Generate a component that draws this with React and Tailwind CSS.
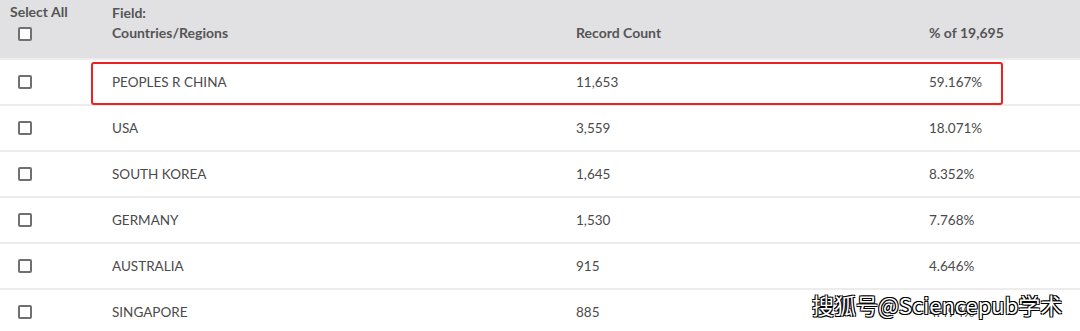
import React from 'react';

const rows = [
  { name: 'PEOPLES R CHINA', count: '11,653', pct: '59.167%' },
  { name: 'USA', count: '3,559', pct: '18.071%' },
  { name: 'SOUTH KOREA', count: '1,645', pct: '8.352%' },
  { name: 'GERMANY', count: '1,530', pct: '7.768%' },
  { name: 'AUSTRALIA', count: '915', pct: '4.646%' },
  { name: 'SINGAPORE', count: '885', pct: '4.494%' },
];

function Checkbox() {
  return <span className="block w-[14px] h-[14px] border-2 border-[#707070] rounded-[2px] bg-white" />;
}

export default function App() {
  return (
    <div className="relative w-[1080px] h-[331px] overflow-hidden bg-white font-['Lato',sans-serif] text-[14px]">
      {/* Header */}
      <div className="grid grid-cols-[112px_464px_353px_1fr] h-[60px] bg-[#e1e1e4] border-b-2 border-[#ececec] text-[#555] font-bold">
        <div className="pl-[10px] pt-[3px] flex flex-col">
          <span className="leading-[18px]">Select All</span>
          <span className="mt-[6px] ml-[8px]"><Checkbox /></span>
        </div>
        <div className="pt-[3px] flex flex-col leading-[20px]">
          <span>Field:</span>
          <span>Countries/Regions</span>
        </div>
        <div className="pt-[23px] leading-[20px]">Record Count</div>
        <div className="pt-[23px] leading-[20px]">% of 19,695</div>
      </div>

      {/* Rows */}
      {rows.map((r) => (
        <div
          key={r.name}
          className="grid grid-cols-[112px_464px_353px_1fr] h-[46px] items-center border-b-2 border-[#ececec] text-[#4a4a4a] text-[13.5px]"
        >
          <div className="pl-[18px]"><Checkbox /></div>
          <div>{r.name}</div>
          <div>{r.count}</div>
          <div>{r.pct}</div>
        </div>
      ))}

      {/* Highlight annotation */}
      <div className="absolute left-[91px] top-[62px] w-[912px] h-[43px] border-2 border-[#f02020] rounded-[3px]" />

      {/* Watermark */}
      <div className="absolute left-[812px] top-[290px] text-[22px] leading-[28px] text-white font-['Noto_Sans_CJK_SC',sans-serif] [text-shadow:1px_1px_0_#000,-1px_-1px_0_#000,1px_-1px_0_#000,-1px_1px_0_#000]">
        搜狐号@Sciencepub学术
      </div>
    </div>
  );
}
